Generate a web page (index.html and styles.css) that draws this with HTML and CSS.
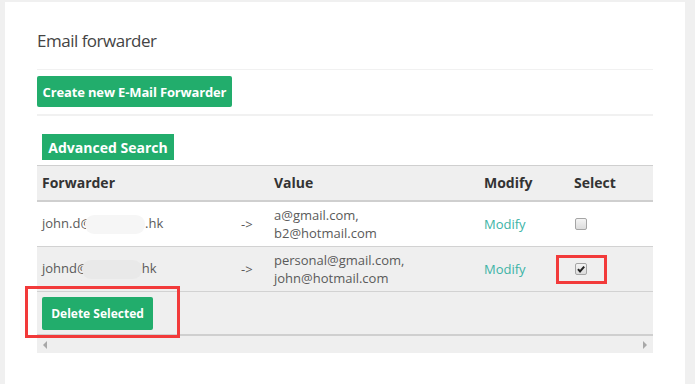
FILE: index.html
```html
<!DOCTYPE html>
<html>
<head>
<meta charset="utf-8">
<link rel="stylesheet" href="styles.css">
</head>
<body>
<div class="panel">
  <h1 class="title">Email forwarder</h1>
  <div class="rule rule-thin"></div>
  <button class="btn btn-create">Create new E-Mail Forwarder</button>
  <div class="rule rule-thick"></div>
  <button class="btn btn-search">Advanced Search</button>
  <div class="table">
    <div class="row head">
      <div class="cell">Forwarder</div>
      <div class="cell"></div>
      <div class="cell">Value</div>
      <div class="cell">Modify</div>
      <div class="cell">Select</div>
    </div>
    <div class="row body-row">
      <div class="cell">john.d@<span class="blur"></span>.hk</div>
      <div class="cell">-&gt;</div>
      <div class="cell">a@gmail.com,<br>b2@hotmail.com</div>
      <div class="cell"><a class="link">Modify</a></div>
      <div class="cell"><span class="check"></span></div>
    </div>
    <div class="row body-row alt">
      <div class="cell">johnd@<span class="blur blur-alt"></span>hk</div>
      <div class="cell">-&gt;</div>
      <div class="cell">personal@gmail.com,<br>john@hotmail.com</div>
      <div class="cell"><a class="link">Modify</a></div>
      <div class="cell"><span class="check checked"><svg viewBox="0 0 12 12" width="12" height="12"><path d="M3 6.2 L5 8.4 L9.2 3.6" fill="none" stroke="#222" stroke-width="2"/></svg></span></div>
    </div>
    <div class="foot">
      <button class="btn btn-delete">Delete Selected</button>
    </div>
    <div class="scrollbar">
      <span class="arrow arrow-left"></span>
      <span class="arrow arrow-right"></span>
    </div>
    <div class="mark mark-delete"></div>
    <div class="mark mark-check"></div>
  </div>
</div>
</body>
</html>
```
FILE: styles.css
```css
html, body {
  margin: 0;
  padding: 0;
}
body {
  background: #f0f0f0;
  font-family: "Open Sans", "DejaVu Sans", sans-serif;
  color: #5a5a5a;
}
.panel {
  margin: 2px 10px 0 5px;
  background: #fff;
  padding: 27px 32px 0 32px;
  min-height: 382px;
  box-sizing: border-box;
}
.title {
  margin: 0;
  font-size: 17px;
  line-height: 24px;
  font-weight: 400;
  color: #444;
  letter-spacing: -0.5px;
}
.rule {
  background: #f1f1f1;
}
.rule-thin {
  margin-top: 16px;
  height: 1px;
}
.rule-thick {
  margin-top: 7px;
  height: 2px;
}
.btn {
  display: block;
  border: 0;
  border-radius: 2px;
  background: #22ad6c;
  color: #fff;
  font-family: "Open Sans", "DejaVu Sans", sans-serif;
  font-weight: 700;
  padding: 0;
  text-align: center;
}
.btn-create {
  margin-top: 6px;
  width: 195px;
  height: 31px;
  font-size: 13px;
  letter-spacing: -0.15px;
}
.btn-search {
  margin: 18px 0 0 5px;
  width: 132px;
  height: 26px;
  font-size: 14px;
  border-radius: 0;
}
.table {
  position: relative;
  margin-top: 5px;
  font-size: 13px;
}
.row {
  display: grid;
  grid-template-columns: 199px 33px 210px 90px 1fr;
  align-items: center;
}
.cell {
  padding-left: 5px;
  line-height: 18px;
}
.head {
  height: 34px;
  background: #efefef;
  border-top: 1px solid #cfcfcf;
  border-bottom: 2px solid #cfcfcf;
  font-weight: 700;
  font-size: 14px;
  color: #333;
}
.body-row {
  height: 44px;
  border-bottom: 1px solid #d2d2d2;
  background: #fff;
}
.body-row.alt {
  background: #efefef;
}
.blur {
  display: inline-block;
  vertical-align: middle;
  width: 60px;
  height: 19px;
  margin-left: -7px;
  margin-top: -2px;
  border-radius: 9px;
  background: #f6f6f6;
}
.blur-alt {
  background: #e9e9e9;
}
.link {
  color: #3cb3a6;
}
.check {
  display: block;
  margin-left: 1px;
  width: 12px;
  height: 12px;
  box-sizing: border-box;
  border: 1px solid #a5a5a5;
  border-radius: 2px;
  background: linear-gradient(#f4f4f4, #dcdcdc);
  position: relative;
}
.check svg {
  position: absolute;
  left: -1px;
  top: -1px;
}
.foot {
  background: #efefef;
  border-bottom: 2px solid #cfcfcf;
  padding: 5px 0 0 5px;
  height: 37px;
}
.btn-delete {
  width: 111px;
  height: 33px;
  font-size: 12px;
}
.scrollbar {
  height: 17px;
  background: #efefef;
  display: flex;
  justify-content: space-between;
  align-items: center;
  padding: 0 6px 0 6px;
}
.arrow {
  width: 0;
  height: 0;
  border-top: 4px solid transparent;
  border-bottom: 4px solid transparent;
}
.arrow-left {
  border-right: 4px solid #a8a8a8;
}
.arrow-right {
  border-left: 4px solid #a8a8a8;
}
.mark {
  position: absolute;
  border: 3px solid #f23a3a;
  box-sizing: border-box;
}
.mark-delete {
  left: -12px;
  top: 121px;
  width: 155px;
  height: 52px;
}
.mark-check {
  left: 519px;
  top: 90px;
  width: 51px;
  height: 29px;
}
```
